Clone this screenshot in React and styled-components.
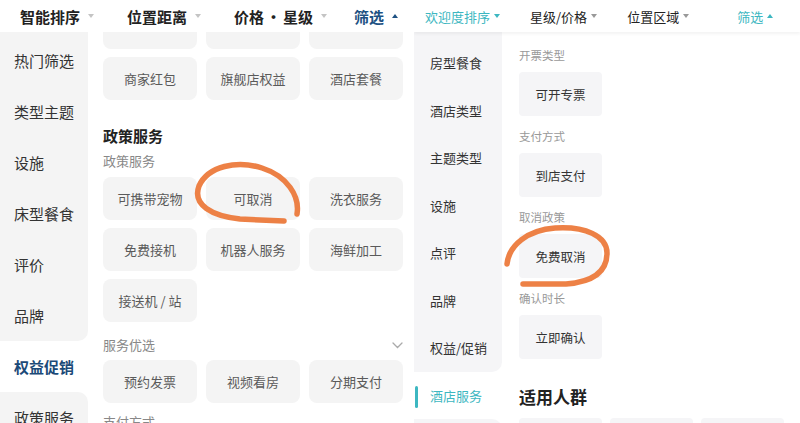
import React from 'react';
import styled, { createGlobalStyle, css } from 'styled-components';

const GlobalStyle = createGlobalStyle`
  html, body { margin: 0; padding: 0; background: #fff; }
  body { font-family: "Noto Sans CJK SC", "Noto Sans", sans-serif; }
`;

const Page = styled.div`
  position: relative;
  display: flex;
  width: 800px;
  height: 423px;
  overflow: hidden;
  background: #fff;
`;

const Panel = styled.div`
  display: flex;
  flex-direction: column;
  width: ${(p) => p.$width}px;
  flex-shrink: 0;
  height: 423px;
  overflow: hidden;
`;

const TopBar = styled.div`
  display: flex;
  align-items: center;
  height: 32px;
  flex-shrink: 0;
  padding-left: ${(p) => p.$pad}px;
  gap: ${(p) => p.$gap}px;
  background: #fff;
  position: relative;
  z-index: 1;
  ${(p) => p.$shadow && css`box-shadow: 0 2px 3px rgba(0, 0, 0, 0.05);`}
`;

const Tab = styled.div`
  display: flex;
  align-items: center;
  gap: ${(p) => (p.$big ? 8 : 4)}px;
  font-size: ${(p) => (p.$big ? 15 : 13)}px;
  font-weight: ${(p) => (p.$big ? 700 : 400)};
  color: ${(p) => p.$color || '#222'};
  margin-left: ${(p) => p.$ml || 0}px;
  white-space: nowrap;
  line-height: 1;
`;

const Dot = styled.span`
  margin: 0 -6px;
`;

const Arrow = styled.span`
  width: 0;
  height: 0;
  border-left: 3px solid transparent;
  border-right: 3px solid transparent;
  ${(p) =>
    p.$up
      ? css`border-bottom: 4px solid ${p.$color || '#c4c4c4'};`
      : css`border-top: 4px solid ${p.$color || '#c4c4c4'};`}
`;

const Body = styled.div`
  display: flex;
  flex: 1;
  min-height: 0;
`;

const Sidebar = styled.div`
  width: 88px;
  flex-shrink: 0;
  display: flex;
  flex-direction: column;
  padding-top: ${(p) => p.$top}px;
  background: linear-gradient(${(p) => p.$bg}, ${(p) => p.$bg}) top / 100% ${(p) => p.$top}px no-repeat, #fff;
`;

const NavItem = styled.div`
  position: relative;
  flex-shrink: 0;
  display: flex;
  align-items: center;
  height: ${(p) => p.$h}px;
  padding-left: ${(p) => p.$pad}px;
  font-size: ${(p) => p.$size}px;
  color: ${(p) => (p.$active ? p.$accent : '#333')};
  font-weight: ${(p) => (p.$active && p.$boldActive ? 700 : 400)};
  background: ${(p) => (p.$active ? '#fff' : p.$bg)};
  border-bottom-right-radius: ${(p) => (p.$before ? 10 : 0)}px;
  border-top-right-radius: ${(p) => (p.$after ? 10 : 0)}px;
  white-space: nowrap;
`;

const ActiveBar = styled.span`
  position: absolute;
  left: 1px;
  top: 14px;
  width: 3px;
  height: 22px;
  border-radius: 2px;
  background: #3db7c1;
`;

const Content = styled.div`
  flex: 1;
  display: flex;
  flex-direction: column;
  padding-left: ${(p) => p.$pad}px;
  padding-top: ${(p) => p.$top || 0}px;
  background: #fff;
`;

const Grid = styled.div`
  display: grid;
  grid-template-columns: repeat(3, ${(p) => p.$w}px);
  grid-auto-rows: ${(p) => p.$h}px;
  column-gap: ${(p) => p.$gap}px;
  row-gap: 8px;
  margin-top: ${(p) => p.$mt}px;
  flex-shrink: 0;
`;

const Chip = styled.div`
  display: flex;
  align-items: center;
  justify-content: center;
  border-radius: ${(p) => p.$radius}px;
  background: ${(p) => p.$bg};
  font-size: ${(p) => p.$size}px;
  color: ${(p) => p.$color};
  white-space: nowrap;
`;

const SectionTitle = styled.div`
  font-size: ${(p) => p.$size}px;
  line-height: ${(p) => p.$lh}px;
  font-weight: 700;
  color: #222;
  margin-top: ${(p) => p.$mt}px;
  flex-shrink: 0;
`;

const SubTitle = styled.div`
  display: flex;
  align-items: center;
  justify-content: space-between;
  font-size: ${(p) => p.$size}px;
  line-height: ${(p) => p.$lh}px;
  color: ${(p) => p.$color};
  margin-top: ${(p) => p.$mt}px;
  padding-right: ${(p) => p.$pr || 0}px;
  flex-shrink: 0;
`;

const Scribble = styled.svg`
  position: absolute;
  left: 0;
  top: 0;
  pointer-events: none;
`;

const leftNav = ['热门筛选', '类型主题', '设施', '床型餐食', '评价', '品牌', '权益促销', '政策服务'];
const rightNav = ['房型餐食', '酒店类型', '主题类型', '设施', '点评', '品牌', '权益/促销', '酒店服务', '适用人群'];

function Nav({ items, active, h, pad, size, bg, accent, boldActive, bar }) {
  return items.map((t, i) => (
    <NavItem
      key={t + i}
      $h={h}
      $pad={pad}
      $size={size}
      $bg={bg}
      $accent={accent}
      $boldActive={boldActive}
      $active={i === active}
      $before={i === active - 1}
      $after={i === active + 1}
    >
      {i === active && bar && <ActiveBar />}
      {t}
    </NavItem>
  ));
}

function LeftChip({ children }) {
  return (
    <Chip $radius={8} $bg="#f4f4f4" $size={13} $color="#5a5a5a">
      {children}
    </Chip>
  );
}

function RightChip({ children }) {
  return (
    <Chip $radius={4} $bg="#f5f5f7" $size={12.5} $color="#333">
      {children}
    </Chip>
  );
}

function LeftPanel() {
  return (
    <Panel $width={414}>
      <TopBar $pad={20} $gap={33}>
        <Tab $big>智能排序<Arrow /></Tab>
        <Tab $big>位置距离<Arrow /></Tab>
        <Tab $big>价格<Dot>·</Dot>星级<Arrow /></Tab>
        <Tab $big $color="#1d5183" $ml={-6}>筛选<Arrow $up $color="#1d5183" /></Tab>
      </TopBar>
      <Body>
        <Sidebar $top={3} $bg="#f4f4f4">
          <Nav items={leftNav} active={6} h={51} pad={14} size={15} bg="#f4f4f4" accent="#1b4a78" boldActive />
        </Sidebar>
        <Content $pad={15}>
          <Grid $w={94} $h={43} $gap={9} $mt={-26}>
            <LeftChip />
            <LeftChip />
            <LeftChip />
            <LeftChip>商家红包</LeftChip>
            <LeftChip>旗舰店权益</LeftChip>
            <LeftChip>酒店套餐</LeftChip>
          </Grid>
          <SectionTitle $size={15} $lh={20} $mt={26}>政策服务</SectionTitle>
          <SubTitle $size={13} $lh={18} $mt={6} $color="#888">政策服务</SubTitle>
          <Grid $w={94} $h={43} $gap={9} $mt={7}>
            <LeftChip>可携带宠物</LeftChip>
            <LeftChip>可取消</LeftChip>
            <LeftChip>洗衣服务</LeftChip>
            <LeftChip>免费接机</LeftChip>
            <LeftChip>机器人服务</LeftChip>
            <LeftChip>海鲜加工</LeftChip>
            <LeftChip>接送机 / 站</LeftChip>
          </Grid>
          <SubTitle $size={13} $lh={18} $mt={14} $color="#888" $pr={11}>
            服务优选
            <svg width="11" height="7" viewBox="0 0 11 7">
              <path d="M1 1 L5.5 5.5 L10 1" fill="none" stroke="#aaa" strokeWidth="1.3" strokeLinecap="round" />
            </svg>
          </SubTitle>
          <Grid $w={94} $h={43} $gap={9} $mt={6}>
            <LeftChip>预约发票</LeftChip>
            <LeftChip>视频看房</LeftChip>
            <LeftChip>分期支付</LeftChip>
          </Grid>
          <SubTitle $size={13} $lh={18} $mt={10} $color="#888">支付方式</SubTitle>
        </Content>
      </Body>
    </Panel>
  );
}

const teal = '#3db7c1';

function RightPanel() {
  const blocks = [
    ['开票类型', '可开专票'],
    ['支付方式', '到店支付'],
    ['取消政策', '免费取消'],
    ['确认时长', '立即确认'],
  ];
  return (
    <Panel $width={386}>
      <TopBar $pad={11} $gap={30} $shadow>
        <Tab $color={teal}>欢迎度排序<Arrow $color={teal} /></Tab>
        <Tab>星级/价格<Arrow $color="#999" /></Tab>
        <Tab>位置区域<Arrow $color="#999" /></Tab>
        <Tab $color={teal} $ml={18}>筛选<Arrow $up $color={teal} /></Tab>
      </TopBar>
      <Body>
        <Sidebar $top={7} $bg="#f5f5f7">
          <Nav items={rightNav} active={7} h={47.5} pad={16} size={13} bg="#f5f5f7" accent={teal} bar />
        </Sidebar>
        <Content $pad={17} $top={15}>
          {blocks.map(([label, chip], i) => (
            <React.Fragment key={label}>
              <SubTitle $size={11.5} $lh={16} $mt={i === 0 ? 0 : 12} $color="#999">{label}</SubTitle>
              <Grid $w={83} $h={44} $gap={8} $mt={9}>
                <RightChip>{chip}</RightChip>
              </Grid>
            </React.Fragment>
          ))}
          <SectionTitle $size={17} $lh={22} $mt={27}>适用人群</SectionTitle>
          <Grid $w={83} $h={44} $gap={8} $mt={10}>
            <RightChip />
            <RightChip />
            <RightChip />
          </Grid>
        </Content>
      </Body>
    </Panel>
  );
}

export default function App() {
  return (
    <Page>
      <GlobalStyle />
      <LeftPanel />
      <RightPanel />
      <Scribble width="800" height="423" viewBox="0 0 800 423">
        <g fill="none" stroke="#ec7a3c" strokeWidth="5.5" strokeLinecap="round" strokeLinejoin="round" opacity="0.95">
          <path d="M297 214 C 300 196, 287 176, 262 168 C 237 160, 208 166, 199 186 C 192 205, 212 216, 240 219 L 284 221" />
          <path d="M507 264 C 509 245, 528 230, 555 228 C 585 226, 607 236, 607 253 C 607 272, 592 282, 566 284 L 523 284" />
        </g>
      </Scribble>
    </Page>
  );
}
